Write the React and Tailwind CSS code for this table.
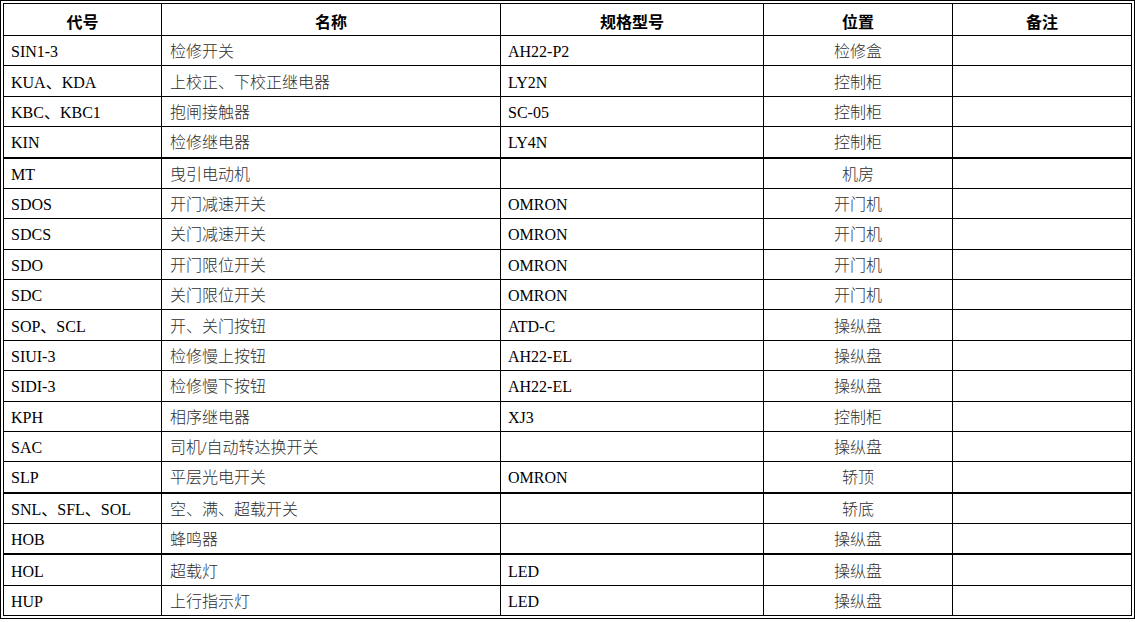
const rows = [
  ["SIN1-3", "检修开关", "AH22-P2", "检修盒"],
  ["KUA、KDA", "上校正、下校正继电器", "LY2N", "控制柜"],
  ["KBC、KBC1", "抱闸接触器", "SC-05", "控制柜"],
  ["KIN", "检修继电器", "LY4N", "控制柜", true],
  ["MT", "曳引电动机", "", "机房"],
  ["SDOS", "开门减速开关", "OMRON", "开门机"],
  ["SDCS", "关门减速开关", "OMRON", "开门机"],
  ["SDO", "开门限位开关", "OMRON", "开门机"],
  ["SDC", "关门限位开关", "OMRON", "开门机"],
  ["SOP、SCL", "开、关门按钮", "ATD-C", "操纵盘"],
  ["SIUI-3", "检修慢上按钮", "AH22-EL", "操纵盘"],
  ["SIDI-3", "检修慢下按钮", "AH22-EL", "操纵盘"],
  ["KPH", "相序继电器", "XJ3", "控制柜"],
  ["SAC", "司机/自动转达换开关", "", "操纵盘"],
  ["SLP", "平层光电开关", "OMRON", "轿顶", true],
  ["SNL、SFL、SOL", "空、满、超载开关", "", "轿底"],
  ["HOB", "蜂鸣器", "", "操纵盘", true],
  ["HOL", "超载灯", "LED", "操纵盘"],
  ["HUP", "上行指示灯", "LED", "操纵盘"],
];

const font = { fontFamily: '"Liberation Serif", "Noto Sans CJK SC", serif' };

export default function App() {
  return (
    <div className="w-[1135px] h-[622px] bg-white">
      <div className="w-[1135px] h-[619px] border border-black p-[2px] box-border" style={font}>
        <div className="flex flex-col h-full border border-black text-[16px] leading-none text-black">
          {/* header */}
          <div className="flex h-[32px] shrink-0 border-b border-black font-bold" style={{ fontFamily: '"Noto Sans CJK SC", sans-serif' }}>
            <div className="w-[158px] shrink-0 border-r border-black flex items-center justify-center pt-[2px]">代号</div>
            <div className="w-[339px] shrink-0 border-r border-black flex items-center justify-center pt-[2px]">名称</div>
            <div className="w-[263px] shrink-0 border-r border-black flex items-center justify-center pt-[2px]">规格型号</div>
            <div className="w-[189px] shrink-0 border-r border-black flex items-center justify-center pt-[2px]">位置</div>
            <div className="flex-1 flex items-center justify-center pt-[2px]">备注</div>
          </div>
          {rows.map((r, i) => (
            <div
              key={i}
              className={`flex flex-1 min-h-0 ${i === rows.length - 1 ? "" : r[4] ? "border-b-2 border-black" : "border-b border-black"}`}
            >
              <div className="w-[158px] shrink-0 border-r border-black flex items-center pl-[7px] pt-[3px] whitespace-nowrap">{r[0]}</div>
              <div className="w-[339px] shrink-0 border-r border-black flex items-center pl-[8px] pt-[3px] text-[#2e2e2e] font-light whitespace-nowrap">{r[1]}</div>
              <div className="w-[263px] shrink-0 border-r border-black flex items-center pl-[7px] pt-[3px] whitespace-nowrap">{r[2]}</div>
              <div className="w-[189px] shrink-0 border-r border-black flex items-center justify-center pt-[3px] text-[#2e2e2e] font-light whitespace-nowrap">{r[3]}</div>
              <div className="flex-1"></div>
            </div>
          ))}
        </div>
      </div>
    </div>
  );
}
